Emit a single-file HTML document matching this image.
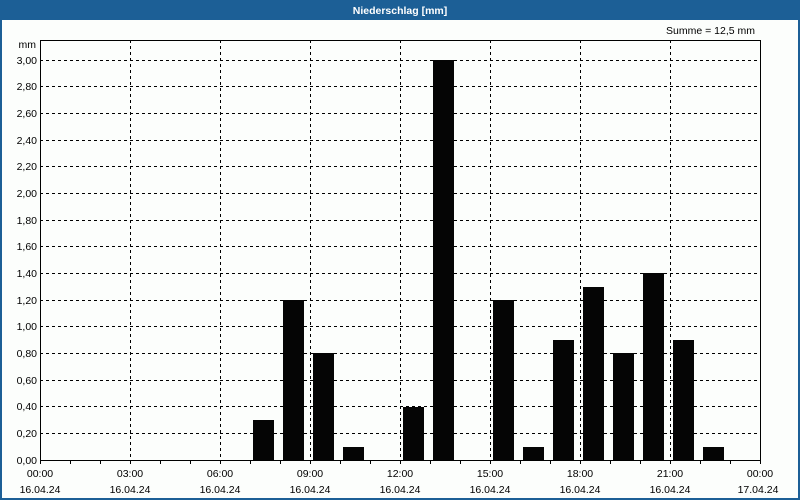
<!DOCTYPE html>
<html><head><meta charset="utf-8"><style>
html,body{margin:0;padding:0;background:#fff}
svg{display:block;font-family:"Liberation Sans",sans-serif;font-size:10.5px}
</style></head><body>
<svg width="800" height="500" xmlns="http://www.w3.org/2000/svg">
<rect x="0" y="0" width="800" height="500" fill="#1c5f96"/>
<rect x="2" y="20" width="796" height="478" fill="#fcfefc"/>
<text x="400" y="14" fill="#fff" font-weight="bold" text-anchor="middle" font-size="10.5">Niederschlag [mm]</text>
<text x="755" y="34" text-anchor="end" fill="#000">Summe = 12,5 mm</text>
<text x="36" y="48" text-anchor="end">mm</text>
<g stroke="#000" stroke-width="1" stroke-dasharray="3,3" fill="none" shape-rendering="crispEdges">
<path d="M40 433.5H760M40 406.5H760M40 380.5H760M40 353.5H760M40 326.5H760M40 300.5H760M40 273.5H760M40 246.5H760M40 220.5H760M40 193.5H760M40 166.5H760M40 140.5H760M40 113.5H760M40 86.5H760M40 60.5H760"/>
<path d="M130.5 40V460M220.5 40V460M310.5 40V460M400.5 40V460M490.5 40V460M580.5 40V460M670.5 40V460"/>
</g>
<g fill="#050505" shape-rendering="crispEdges">
<rect x="253" y="420" width="21" height="40"/>
<rect x="283" y="300" width="21" height="160"/>
<rect x="313" y="353" width="21" height="107"/>
<rect x="343" y="447" width="21" height="13"/>
<rect x="403" y="407" width="21" height="53"/>
<rect x="433" y="60" width="21" height="400"/>
<rect x="493" y="300" width="21" height="160"/>
<rect x="523" y="447" width="21" height="13"/>
<rect x="553" y="340" width="21" height="120"/>
<rect x="583" y="287" width="21" height="173"/>
<rect x="613" y="353" width="21" height="107"/>
<rect x="643" y="273" width="21" height="187"/>
<rect x="673" y="340" width="21" height="120"/>
<rect x="703" y="447" width="21" height="13"/>
</g>
<g stroke="#000" fill="none" shape-rendering="crispEdges">
<rect x="40.5" y="40.5" width="720" height="420"/>
<path d="M40.5 460V464M70.5 460V464M100.5 460V464M130.5 460V464M160.5 460V464M190.5 460V464M220.5 460V464M250.5 460V464M280.5 460V464M310.5 460V464M340.5 460V464M370.5 460V464M400.5 460V464M430.5 460V464M460.5 460V464M490.5 460V464M520.5 460V464M550.5 460V464M580.5 460V464M610.5 460V464M640.5 460V464M670.5 460V464M700.5 460V464M730.5 460V464M760.5 460V464"/>
</g>
<g text-anchor="end">
<text x="37" y="464">0,00</text><text x="37" y="437">0,20</text><text x="37" y="410">0,40</text><text x="37" y="384">0,60</text><text x="37" y="357">0,80</text><text x="37" y="330">1,00</text><text x="37" y="304">1,20</text><text x="37" y="277">1,40</text><text x="37" y="250">1,60</text><text x="37" y="224">1,80</text><text x="37" y="197">2,00</text><text x="37" y="170">2,20</text><text x="37" y="144">2,40</text><text x="37" y="117">2,60</text><text x="37" y="90">2,80</text><text x="37" y="64">3,00</text>
</g>
<g text-anchor="middle">
<text x="40" y="477">00:00</text><text x="130" y="477">03:00</text><text x="220" y="477">06:00</text><text x="310" y="477">09:00</text><text x="400" y="477">12:00</text><text x="490" y="477">15:00</text><text x="580" y="477">18:00</text><text x="670" y="477">21:00</text><text x="760" y="477">00:00</text>
<text x="40" y="493">16.04.24</text><text x="130" y="493">16.04.24</text><text x="220" y="493">16.04.24</text><text x="310" y="493">16.04.24</text><text x="400" y="493">16.04.24</text><text x="490" y="493">16.04.24</text><text x="580" y="493">16.04.24</text><text x="670" y="493">16.04.24</text><text x="758" y="493">17.04.24</text>
</g>
</svg>
</body></html>
